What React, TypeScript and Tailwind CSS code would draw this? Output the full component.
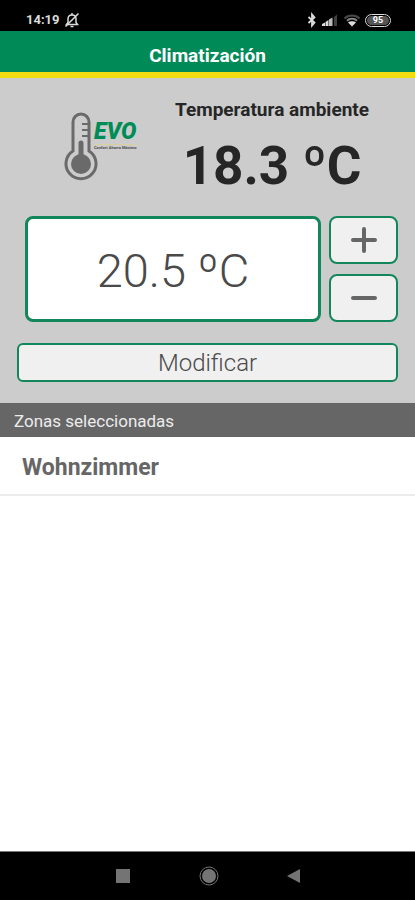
import { useState } from "react";

interface StepButtonProps {
  label: string;
  path: string;
  onClick: () => void;
}

const zones: string[] = ["Wohnzimmer"];

function StatusBar() {
  return (
    <div className="flex h-[31px] shrink-0 items-end justify-between bg-black pb-[3px] pl-[26px] pr-6 text-[#dcdcdc]">
      <div className="flex items-center gap-1">
        <span className="text-[13px] leading-4 font-bold">14:19</span>
        <svg width="16" height="16" viewBox="0 0 16 16" fill="none" stroke="currentColor" strokeWidth="1.500">
          <path d="M2.500 12.500h11l-1.500-2V7c0-2.500-1.500-4-4-4S4 4.500 4 7v3.500z" />
          <path d="M6.500 14.500h3M8 1v2M1.500 14.500l13-13" />
        </svg>
      </div>
      <div className="flex items-center">
        <svg className="mr-1" width="10" height="16" viewBox="0 0 10 16" fill="none" stroke="currentColor" strokeWidth="1.800">
          <path d="M1.500 5l6 5.500L5 13.500v-11l2.500 3L1.500 11" />
        </svg>
        <svg className="mr-1" width="18" height="16" viewBox="0 0 18 16">
          <path d="M1 14v-2l3-1.500V14z" fill="#dcdcdc" />
          <path d="M4.500 14v-4l3-2v6z" fill="#dcdcdc" />
          <path d="M8 14V7.500l3.500-2V14z" fill="#bcbcbc" />
          <path d="M13 14V5l3-2.500V14z" fill="#404040" />
        </svg>
        <svg className="mr-1" width="18" height="16" viewBox="0 0 18 16" fill="none" strokeWidth="2">
          <path d="M1.500 6.500c4-4 11-4 15 0" stroke="#484848" />
          <path d="M4 8.800c3-2.800 7-2.800 10 0" stroke="#8a8a8a" />
          <path d="M5 10.500c2-1.600 6-1.600 8 0L9 14.500z" fill="#dcdcdc" />
        </svg>
        <span className="flex h-[13px] w-[26px] items-center justify-center rounded-full border border-[#dcdcdc] p-px">
          <span className="flex h-full w-full items-center justify-center rounded-full bg-[#555555] text-[9px] leading-none font-bold text-white">95</span>
        </span>
      </div>
    </div>
  );
}

function Logo() {
  return (
    <div className="flex items-start">
      <svg width="34" height="70" viewBox="0 0 34 70" fill="none">
        <path
          d="M9 39V10a8 8 0 0 1 16 0V39a15 15 0 1 1-16 0z"
          stroke="#6a6a6a"
          strokeWidth="3"
        />
        <path d="M18 12h6M18 18h6M18 24h6" stroke="#6a6a6a" strokeWidth="2" />
        <path d="M17 31v20" stroke="#6a6a6a" strokeWidth="5" strokeLinecap="round" />
        <circle cx="17" cy="52" r="10" fill="#6a6a6a" />
      </svg>
      <div className="mt-2 -ml-1 flex flex-col">
        <span className="text-[23px] leading-[24px] font-black italic text-[#008c57]">EVO</span>
        <span className="border-t border-[#d8cf9a] text-[4px] leading-[5px] font-bold whitespace-nowrap text-[#4a4a4a]">Confort Ahorro Máximo</span>
      </div>
    </div>
  );
}

function StepButton({ label, path, onClick }: StepButtonProps) {
  return (
    <button
      type="button"
      aria-label={label}
      onClick={onClick}
      className="flex h-12 w-[69px] items-center justify-center rounded-lg border-2 border-[#12875c] bg-[#f0f0f0]"
    >
      <svg width="28" height="28" viewBox="0 0 28 28" fill="none" stroke="#666666" strokeWidth="4" strokeLinecap="round">
        <path d={path} />
      </svg>
    </button>
  );
}

function App() {
  const [target, setTarget] = useState(20.5);

  const changeTarget = (step: number) => {
    setTarget((prevState) => prevState + step);
  };

  return (
    <div className="flex min-h-screen w-full flex-col bg-white font-[Roboto,sans-serif]">
      <StatusBar />
      <header className="flex h-[47px] shrink-0 items-center justify-center border-b-6 border-[#f2dc12] bg-[#008a58]">
        <h1 className="pt-2 text-[19px] leading-6 font-bold text-white">Climatización</h1>
      </header>

      <main className="flex flex-1 flex-col">
        <section className="bg-[#cccccc] px-[17px] pt-5 pb-[21px]">
          <div className="flex justify-between pr-[29px] pl-[47px]">
            <div className="pt-[14px]">
              <Logo />
            </div>
            <div className="flex flex-col items-center text-[#262626]">
              <h2 className="text-[19px] leading-6 font-bold">Temperatura ambiente</h2>
              <p className="pt-3 text-[53px] leading-[64px] font-bold">18.3 ºC</p>
            </div>
          </div>

          <div className="mt-[18px] flex gap-2 pl-2">
            <output className="flex flex-1 items-center justify-center rounded-lg border-3 border-[#12875c] bg-white pt-1 text-[47px] leading-[56px] font-light text-[#4a4a4a]">
              {target.toFixed(1)} ºC
            </output>
            <div className="flex flex-col gap-[10px]">
              <StepButton label="Subir temperatura" path="M3 14h22M14 3v22" onClick={() => changeTarget(0.5)} />
              <StepButton label="Bajar temperatura" path="M3 14h22" onClick={() => changeTarget(-0.5)} />
            </div>
          </div>

          <button
            type="button"
            className="mt-[21px] h-[39px] w-full rounded-md border-2 border-[#12875c] bg-[#f0f0f0] text-[24px] leading-8 font-light text-[#4a4a4a]"
          >
            Modificar
          </button>
        </section>

        <h2 className="h-[34px] bg-[#666666] pl-[14px] text-[17px] leading-[36px] text-[#ececec]">Zonas seleccionadas</h2>
        <ul>
          {zones.map((zone) => (
            <li key={zone} className="border-b-2 border-[#ebebeb] px-[22px] pt-[17px] pb-3 text-[23px] leading-7 font-bold text-[#666666]">
              {zone}
            </li>
          ))}
        </ul>
      </main>

      <nav className="flex h-[49px] shrink-0 items-center justify-center gap-[67px] border-t border-[#777777] bg-black text-[#747474]">
        <button type="button" aria-label="Recientes">
          <svg width="18" height="20" viewBox="0 0 18 20" fill="currentColor">
            <path d="M2 3h14v14H2z" />
          </svg>
        </button>
        <button type="button" aria-label="Inicio">
          <svg width="20" height="20" viewBox="0 0 20 20" fill="currentColor">
            <circle cx="10" cy="10" r="7" />
            <circle cx="10" cy="10" r="9" fill="none" stroke="currentColor" />
          </svg>
        </button>
        <button type="button" aria-label="Atrás">
          <svg width="16" height="20" viewBox="0 0 16 20" fill="currentColor">
            <path d="M14 3v14L1 10z" />
          </svg>
        </button>
      </nav>
    </div>
  );
}

export default App;
